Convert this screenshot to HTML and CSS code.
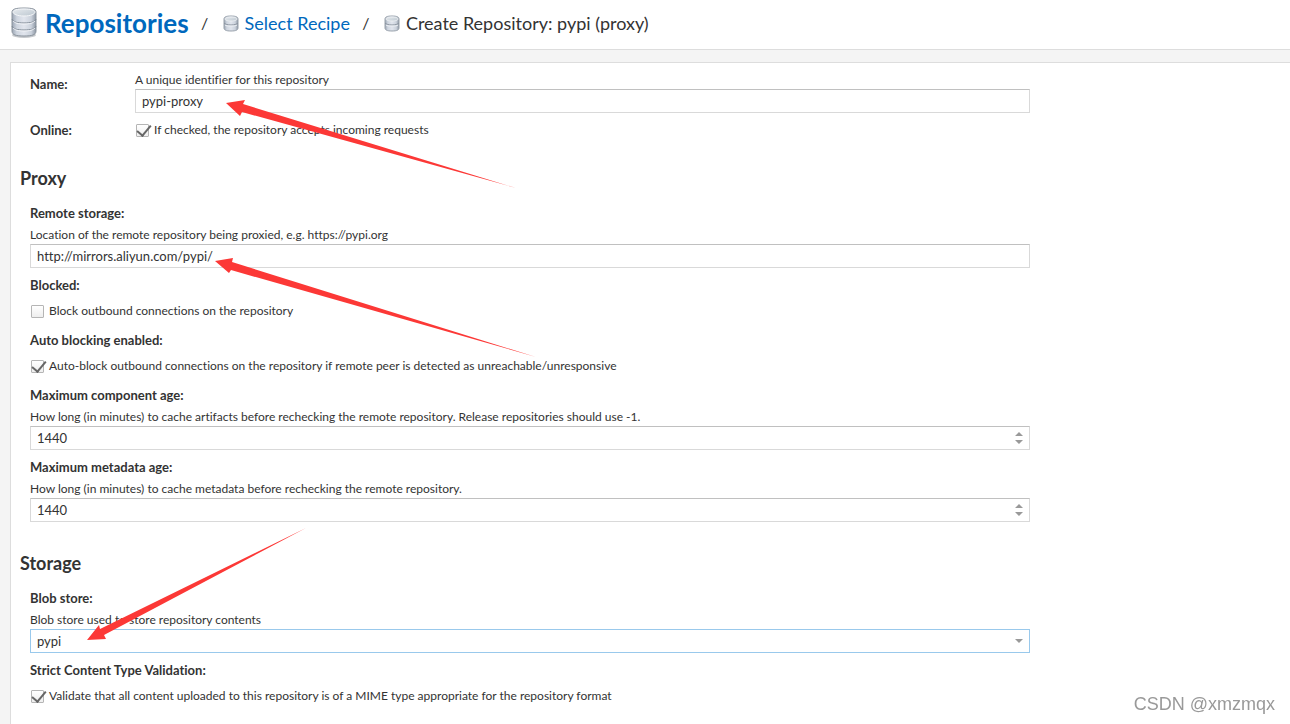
FILE: index.html
```html
<!DOCTYPE html>
<html lang="en">
<head>
<meta charset="utf-8">
<title>Create Repository</title>
<link rel="stylesheet" href="styles.css">
</head>
<body>
<svg class="defs" aria-hidden="true">
  <defs>
    <linearGradient id="side" x1="0" x2="1" y1="0" y2="0">
      <stop offset="0" stop-color="#9ba5b3"/><stop offset=".2" stop-color="#ced5df"/><stop offset=".5" stop-color="#e1e5ed"/><stop offset=".8" stop-color="#cbd2dc"/><stop offset="1" stop-color="#8e98a5"/>
    </linearGradient>
    <linearGradient id="lid" x1="0" x2="1" y1="0" y2="1">
      <stop offset="0" stop-color="#e6eaee"/><stop offset="1" stop-color="#bcc7d0"/>
    </linearGradient>
    <symbol id="db-large" viewBox="0 0 26 32">
      <ellipse cx="13" cy="28" rx="12" ry="3" fill="#c5c8cc"/>
      <path d="M1 5C1 2 5 1 13 1s12 1 12 4v19c0 4-4 5-12 5S1 28 1 24z" fill="url(#side)" stroke="#8b949e"/>
      <path d="M2 5c0-2 4-3 11-3s11 1 11 3-4 4-11 4S2 7 2 5z" fill="url(#lid)" stroke="#f5f7f9"/>
      <path d="M1 12c1 3 5 4 12 4s11-1 12-4M1 19c1 3 5 4 12 4s11-1 12-4" fill="none" stroke="#7f8994"/>
      <path d="M2 14c2 2 5 3 11 3s9-1 11-3M2 21c2 2 5 3 11 3s9-1 11-3" fill="none" stroke="#f3f5f9"/>
    </symbol>
    <symbol id="db-small" viewBox="0 0 16 17">
      <path d="M1 4c0-2 2-3 7-3s7 1 7 3v9c0 2-2 3-7 3s-7-1-7-3z" fill="url(#side)" stroke="#98a1ab"/>
      <path d="M2 4c0-1 2-2 6-2s6 1 6 2-2 2-6 2-6-1-6-2z" fill="url(#lid)" stroke="#edf0f3"/>
      <path d="M1 8c1 1 3 2 7 2s6-1 7-2" fill="none" stroke="#8b949f"/>
      <path d="M2 10c1 1 3 1 6 1s5 0 6-1" fill="none" stroke="#eef1f5"/>
    </symbol>
  </defs>
</svg>

<header class="header">
  <svg class="icon-large" aria-hidden="true"><use href="#db-large"/></svg>
  <a class="title" href="#">Repositories</a>
  <span class="separator">/</span>
  <svg class="icon-small" aria-hidden="true"><use href="#db-small"/></svg>
  <a class="crumb" href="#">Select Recipe</a>
  <span class="separator">/</span>
  <svg class="icon-small" aria-hidden="true"><use href="#db-small"/></svg>
  <span class="crumb crumb-current">Create Repository: pypi (proxy)</span>
</header>

<main class="content">
  <form class="panel">
    <div class="fields general">
      <div class="row">
        <label class="label row-label" for="name">Name:</label>
        <div class="row-body">
          <p class="hint">A unique identifier for this repository</p>
          <input class="input" id="name" type="text" value="pypi-proxy">
        </div>
      </div>
      <div class="row">
        <span class="label">Online:</span>
        <label class="check"><input type="checkbox" checked>If checked, the repository accepts incoming requests</label>
      </div>
    </div>

    <h2 class="heading">Proxy</h2>
    <div class="fields">
      <div class="field">
        <label class="label" for="remote">Remote storage:</label>
        <p class="hint">Location of the remote repository being proxied, e.g. https://pypi.org</p>
        <input class="input" id="remote" type="text" value="http://mirrors.aliyun.com/pypi/">
      </div>
      <div class="field">
        <span class="label">Blocked:</span>
        <label class="check"><input type="checkbox">Block outbound connections on the repository</label>
      </div>
      <div class="field">
        <span class="label">Auto blocking enabled:</span>
        <label class="check"><input type="checkbox" checked>Auto-block outbound connections on the repository if remote peer is detected as unreachable/unresponsive</label>
      </div>
      <div class="field">
        <label class="label" for="component-age">Maximum component age:</label>
        <p class="hint">How long (in minutes) to cache artifacts before rechecking the remote repository. Release repositories should use -1.</p>
        <div class="control">
          <input class="input" id="component-age" type="number" value="1440">
          <svg class="arrows" viewBox="0 0 10 14" aria-hidden="true"><path d="M1 5l4-4 4 4zM1 9h8l-4 4z"/></svg>
        </div>
      </div>
      <div class="field">
        <label class="label" for="metadata-age">Maximum metadata age:</label>
        <p class="hint">How long (in minutes) to cache metadata before rechecking the remote repository.</p>
        <div class="control">
          <input class="input" id="metadata-age" type="number" value="1440">
          <svg class="arrows" viewBox="0 0 10 14" aria-hidden="true"><path d="M1 5l4-4 4 4zM1 9h8l-4 4z"/></svg>
        </div>
      </div>
    </div>

    <h2 class="heading">Storage</h2>
    <div class="fields">
      <div class="field">
        <label class="label" for="blob">Blob store:</label>
        <p class="hint">Blob store used to store repository contents</p>
        <div class="control">
          <select class="input input-active" id="blob"><option>pypi</option></select>
          <svg class="arrows" viewBox="0 0 10 14" aria-hidden="true"><path d="M1 5h8l-4 4z"/></svg>
        </div>
      </div>
      <div class="field">
        <span class="label">Strict Content Type Validation:</span>
        <label class="check"><input type="checkbox" checked>Validate that all content uploaded to this repository is of a MIME type appropriate for the repository format</label>
      </div>
    </div>
  </form>
</main>

<svg class="annotations" width="560" height="660" aria-hidden="true">
  <path d="M226 103l19-3-2 4 273 84-274-76-2 4z"/>
  <path d="M215 261l18-3-1 4 304 95-305-87-2 3z"/>
  <path d="M87 640l12-15 1 4 206-101-202 107 2 4z"/>
</svg>
<div class="watermark">CSDN @xmzmqx</div>
</body>
</html>
```
FILE: styles.css
```css
* {
  box-sizing: border-box;
}

body {
  display: flex;
  flex-direction: column;
  min-height: 100vh;
  margin: 0;
  background: #f4f4f4;
  color: #333;
  font-family: Lato, "Liberation Sans", sans-serif;
  font-size: 12px;
  font-variant-ligatures: none;
}

.defs {
  position: absolute;
  width: 0;
  height: 0;
}

.header {
  display: flex;
  align-items: center;
  height: 50px;
  padding: 0 11px 3px;
  border-bottom: 1px solid #ddd;
  background: #fff;
  white-space: nowrap;
}

.icon-large {
  width: 26px;
  height: 32px;
}

.title {
  margin-left: 8px;
  color: #0068bd;
  font-size: 26px;
  font-weight: 700;
  text-decoration: none;
}

.separator {
  width: 34px;
  padding-right: 2px;
  font-size: 16px;
  line-height: 24px;
  text-align: center;
}

.icon-small {
  width: 16px;
  height: 17px;
}

.crumb {
  margin-left: 6px;
  color: #0068bd;
  font-size: 18px;
  text-decoration: none;
}

.crumb-current {
  color: #333;
}

.content {
  display: flex;
  flex: 1;
  padding: 12px 0 0 10px;
}

.panel {
  flex: 1;
  padding: 8px 9px;
  border: solid #ddd;
  border-width: 1px 0 0 1px;
  background: #fff;
}

.fields {
  display: flex;
  flex-direction: column;
  gap: 7px;
  max-width: 1010px;
  padding-left: 10px;
}

.row {
  display: grid;
  grid-template-columns: 105px 1fr;
}

.row-label {
  padding-top: 3px;
}

.label {
  display: block;
  font-size: 13px;
  font-weight: 700;
  line-height: 20px;
}

.hint {
  margin: 0;
  line-height: 18px;
}

.field .hint {
  margin-top: 3px;
}

.input {
  display: block;
  width: 100%;
  height: 24px;
  margin: 0;
  padding: 0 6px;
  border: 1px solid #d9d9d9;
  border-top-color: silver;
  border-radius: 0;
  outline: 0;
  background: #fff;
  color: #333;
  font: 13px Lato, "Liberation Sans", sans-serif;
  font-variant-ligatures: none;
  appearance: none;
}

.input[type="number"] {
  appearance: textfield;
}

.input-active {
  border-color: #99c9ec;
}

.control {
  position: relative;
}

.arrows {
  position: absolute;
  top: 5px;
  right: 6px;
  width: 10px;
  height: 14px;
  fill: #999;
  pointer-events: none;
}

.check {
  display: flex;
  align-items: center;
  gap: 5px;
  line-height: 20px;
}

.field .check {
  padding: 6px 0 2px;
}

.check input {
  position: relative;
  width: 13px;
  height: 13px;
  margin: 0 0 0 1px;
  border: 1px solid #b5b5b5;
  border-radius: 1px;
  background: linear-gradient(#fff, #eee);
  appearance: none;
}

.check input:checked::after {
  position: absolute;
  top: -3px;
  left: 3px;
  width: 6px;
  height: 12px;
  border: solid #666;
  border-width: 0 2px 2px 0;
  content: "";
  transform: rotate(40deg);
}

.heading {
  margin: 29px 0 13px;
  font-size: 18px;
  font-weight: 700;
  line-height: 24px;
}

.general + .heading {
  margin-top: 26px;
}

.annotations {
  position: absolute;
  top: 0;
  left: 0;
  fill: #fc3836;
  pointer-events: none;
}

.watermark {
  position: fixed;
  right: 15px;
  bottom: 8px;
  color: #999;
  font-family: "Liberation Sans", sans-serif;
  font-size: 18px;
  line-height: 24px;
}
```
